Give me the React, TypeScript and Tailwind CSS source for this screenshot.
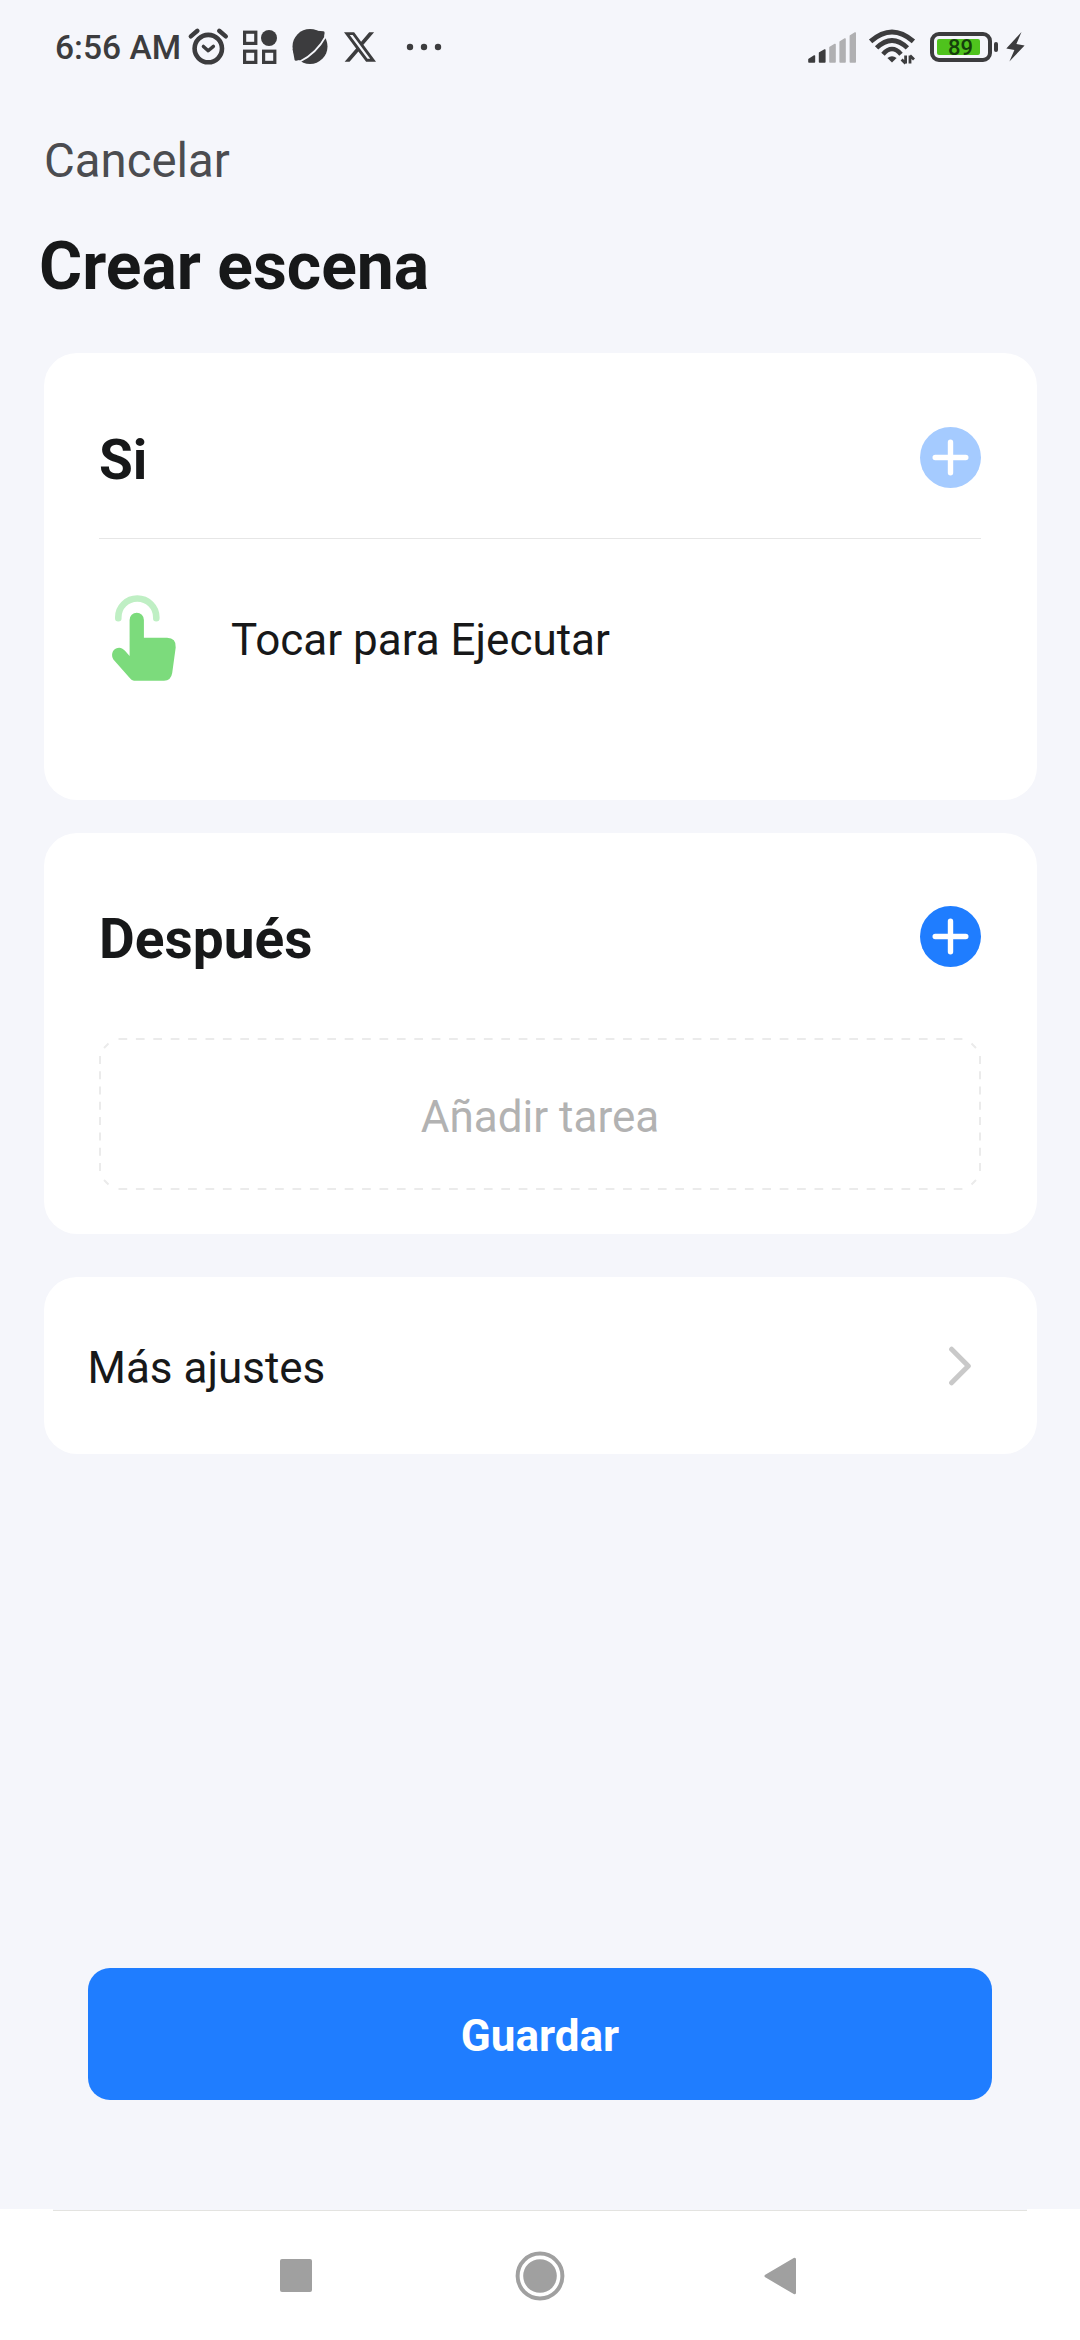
/**
 * Scene creation screen
 * "Si" (condition) and "Después" (task) cards, extra settings and save button
 */

import type { ReactNode } from "react";

const AlarmIcon = () => (
  <svg className="h-[40px] w-[42px]" viewBox="187 27 42 40" fill="none" stroke="currentColor">
    <circle cx="208.3" cy="48.6" r="13.7" strokeWidth="4.6" />
    <path d="M190.8 36.4l6.6-5.6M225.8 36.4l-6.6-5.6" strokeWidth="4.4" strokeLinecap="round" />
    <path d="M203.4 46.4l4.8 4.4 5.2-4.4" strokeWidth="3.4" strokeLinecap="round" strokeLinejoin="round" />
  </svg>
);

const AppsIcon = () => (
  <svg className="h-[40px] w-[34px]" viewBox="243 27 34 40" fill="none" stroke="currentColor" strokeWidth="3.2">
    <rect x="244.6" y="32.2" width="11.2" height="11.2" />
    <rect x="244.6" y="51.2" width="11.2" height="11.2" />
    <rect x="263.6" y="51.2" width="11.2" height="11.2" />
    <circle cx="269" cy="38" r="8" fill="currentColor" stroke="none" />
  </svg>
);

const PlanetIcon = () => (
  <svg className="h-[40px] w-[38px]" viewBox="291 27 38 40">
    <circle cx="310" cy="46.5" r="17.5" fill="currentColor" />
    <path d="M292.6 49L294.6 60Q295 61 296.2 60.8L303 59ZM314 30.5L323.4 31.3Q324.8 31.5 324.6 33L323.6 39Z" fill="currentColor" />
    <path d="M299.5 61.8Q316.5 53.5 326.2 35.5" fill="none" stroke="#f5f6fb" strokeWidth="1.7" />
  </svg>
);

const XIcon = () => (
  <svg className="h-[30px] w-[32px]" viewBox="0 1 24 22" preserveAspectRatio="none" fill="currentColor">
    <path d="M18.901 1.153h3.68l-8.04 9.19L24 22.846h-7.406l-5.8-7.584-6.638 7.584H.474l8.6-9.83L0 1.154h7.594l5.243 6.932ZM17.61 20.644h2.039L6.486 3.24H4.298Z" />
  </svg>
);

const MoreIcon = () => (
  <svg className="h-[8px] w-[36px]" viewBox="406 43 36 8" fill="currentColor">
    <circle cx="410" cy="47" r="3.2" />
    <circle cx="424" cy="47" r="3.2" />
    <circle cx="438" cy="47" r="3.2" />
  </svg>
);

const SignalIcon = () => (
  <svg className="h-[32px] w-[50px]" viewBox="807 31 50 32">
    <g fill="#3c3c3e" stroke="#3c3c3e" strokeWidth="1.6" strokeLinejoin="round">
      <path d="M809 62V59.5L814.4 56V62Z" />
      <path d="M819.6 62V53L824.8 50V62Z" />
    </g>
    <g fill="#b0b0b2" stroke="#b0b0b2" strokeWidth="1.6" strokeLinejoin="round">
      <path d="M830 62V47.5L835 44.5V62Z" />
      <path d="M840.2 62V42L845 39V62Z" />
      <path d="M850.4 62V36L855.2 33V62Z" />
    </g>
  </svg>
);

const WifiIcon = () => (
  <svg className="h-[38px] w-[48px]" viewBox="868 29 48 38" fill="none" stroke="currentColor">
    <path d="M870.6 42.4Q892 23.6 913.4 42.4" strokeWidth="5" />
    <path d="M876.6 48.9Q892 34 907.4 48.9" strokeWidth="4.8" />
    <path d="M883 55.2Q892 44.8 901 55.2" strokeWidth="4.6" />
    <path d="M887.4 59Q892 55.4 896.6 59L892 63.6Z" fill="currentColor" stroke="none" />
    <path d="M905.6 56.5V64.5M905.6 64.5L901.6 60.6M910 64.5V56.5M910 56.5L914 60.4" strokeWidth="2.8" />
  </svg>
);

const BoltIcon = () => (
  <svg className="h-[32px] w-[20px]" viewBox="1005 32 20 32" fill="currentColor">
    <path d="M1021.5 33L1006.3 49.6L1014.4 51L1009.4 62.4L1024.6 46.6L1016.4 45Z" />
  </svg>
);

const TapIcon = () => (
  <svg className="h-[94px] w-[72px]" viewBox="108 591 72 94">
    <path d="M118.3 618.3V617.2A19 18.7 0 0 1 156.3 617.2V618.3" fill="none" stroke="#bfefc4" strokeWidth="6.6" strokeLinecap="round" />
    <path
      d="M129.6 656V620A7.15 7.3 0 0 1 143.9 620V637.8H167Q176.4 638 175.7 647.5L172.2 673Q171 680.7 164 680.7H134Q131.6 680.7 130.2 678.6L113.4 659.4C110.8 655 112.4 650.2 116 648.4C119.6 646.6 123 648.2 125 650.8Z"
      fill="#7cdb7c"
    />
  </svg>
);

function StatusBar() {
  return (
    <div className="flex h-[94px] items-center justify-between pr-[55px] pl-[55px] text-[#3c3c3e]">
      <div className="flex items-center">
        <span className="w-[132px] pt-px text-[33.6px] leading-[40px] font-medium whitespace-nowrap">6:56 AM</span>
        <AlarmIcon />
        <span className="w-[14px]" />
        <AppsIcon />
        <span className="w-[14px]" />
        <PlanetIcon />
        <span className="w-[15px]" />
        <XIcon />
        <span className="w-[30px]" />
        <MoreIcon />
      </div>
      <div className="flex items-center">
        <SignalIcon />
        <span className="w-[11px]" />
        <WifiIcon />
        <span className="w-[14px]" />
        <div className="flex h-[30px] w-[62px] items-center rounded-[9px] border-4 border-[#3c3c3e] px-[3px]">
          <div className="flex h-[16px] w-[43px] items-center justify-center rounded-[2px] bg-[#4fc31d] pt-[2px] pl-[4px] text-[22px] leading-[22px] font-medium text-[#15400c]">
            89
          </div>
        </div>
        <span className="ml-[2px] h-[10px] w-[4px] rounded-[2px] bg-[#3c3c3e]" />
        <span className="w-[7px]" />
        <BoltIcon />
      </div>
    </div>
  );
}

function AddButton({ disabled = false }: { disabled?: boolean }) {
  return (
    <button className={disabled ? "text-[#a5cbff]" : "text-[#1f7dff]"} aria-label="Añadir">
      <svg className="h-[61px] w-[61px]" viewBox="0 0 61 61">
        <circle cx="30.5" cy="30.5" r="30.5" fill="currentColor" />
        <path d="M15.2 30.5h30.6M30.5 15.2v30.6" stroke="#fff" strokeWidth="5.4" strokeLinecap="round" />
      </svg>
    </button>
  );
}

function CardTitle({ children }: { children: ReactNode }) {
  return <h2 className="pt-[5px] text-[55px] leading-[64px] font-bold">{children}</h2>;
}

/* Dashes are longer than the ones border-dashed gives */
function DashedOutline() {
  return (
    <svg className="absolute inset-0 h-full w-full" viewBox="0 0 882 152" fill="none" stroke="#ebebeb" strokeWidth="2">
      <path d="M19.5 1H864M19.5 151H864" strokeDasharray="8.7 8.7" />
      <path d="M1 18V133M881 18V133" strokeDasharray="8 7.28" />
      <path d="M5 10L9.5 5.5M872.5 5.5L877 10M5 142L9.5 146.5M872.5 146.5L877 142" />
    </svg>
  );
}

function App() {
  return (
    <div className="flex h-[2340px] w-[1080px] flex-col overflow-hidden bg-[#f5f6fb] font-['Roboto',sans-serif] text-[#171819]">
      <StatusBar />

      <header className="h-[259px] pt-[37px]">
        <button className="block pl-[44px] text-[47.3px] leading-[60px] text-[#4b4c50]">Cancelar</button>
        <h1 className="mt-[36px] pl-[39px] text-[66px] leading-[80px] font-bold">Crear escena</h1>
      </header>

      <main className="flex flex-col px-[43.5px]">
        {/* Condition */}
        <section className="h-[447px] rounded-[33px] bg-white px-[55.5px]">
          <div className="flex h-[185px] items-center justify-between pt-[24px]">
            <CardTitle>Si</CardTitle>
            <AddButton disabled />
          </div>
          <div className="h-px bg-[#e6e6e6]" />
          <div className="flex items-center pt-[52px] pl-[9px]">
            <TapIcon />
            <span className="pt-[4px] pl-[51px] text-[44px] leading-[52px]">Tocar para Ejecutar</span>
          </div>
        </section>

        {/* Task */}
        <section className="mt-[33px] h-[401px] rounded-[33px] bg-white px-[55.5px]">
          <div className="flex h-[183px] items-center justify-between pt-[24px]">
            <CardTitle>Después</CardTitle>
            <AddButton />
          </div>
          <div className="relative mt-[22px] flex h-[152px] items-center justify-center">
            <DashedOutline />
            <span className="pt-[6px] text-[44px] leading-[52px] text-[#b2b2b2]">Añadir tarea</span>
          </div>
        </section>

        <section className="mt-[43px] flex h-[177px] items-center justify-between rounded-[33px] bg-white pr-[65px] pl-[44px]">
          <span className="pt-[4px] text-[44px] leading-[52px]">Más ajustes</span>
          <svg className="h-[40px] w-[24px]" viewBox="947 1346 24 40" fill="none" stroke="#c9c9c9" strokeWidth="5" strokeLinecap="round" strokeLinejoin="round">
            <path d="M950.6 1349.2L967.3 1366L950.6 1382.8" />
          </svg>
        </section>
      </main>

      <div className="mt-auto px-[88px] pb-[109px]">
        <button className="flex h-[132px] w-full items-center justify-center rounded-[22px] bg-[#1f7dff] text-[44px] font-bold text-white">
          <span className="pt-[4px]">Guardar</span>
        </button>
      </div>

      {/* System navigation */}
      <nav className="h-[131px] bg-white px-[53px] text-[#a0a0a0]">
        <div className="h-[2px] border-b border-[#e3e3e0] bg-[#f5f6fb]" />
        <div className="flex h-[129px] items-center pl-[227px]">
          <span className="h-[33px] w-[32px] rounded-[2px] bg-[#a0a0a0]" />
          <svg className="ml-[203px] h-[50px] w-[50px]" viewBox="0 0 50 50" fill="currentColor">
            <circle cx="25" cy="25" r="22.4" fill="none" stroke="currentColor" strokeWidth="4" />
            <circle cx="25" cy="25" r="16.8" />
          </svg>
          <svg className="ml-[199px] h-[38px] w-[32px]" viewBox="0 0 32 38" fill="currentColor" stroke="currentColor" strokeWidth="3" strokeLinejoin="round">
            <path d="M2 19L30.5 2.2V35.8Z" />
          </svg>
        </div>
      </nav>
    </div>
  );
}

export default App;
